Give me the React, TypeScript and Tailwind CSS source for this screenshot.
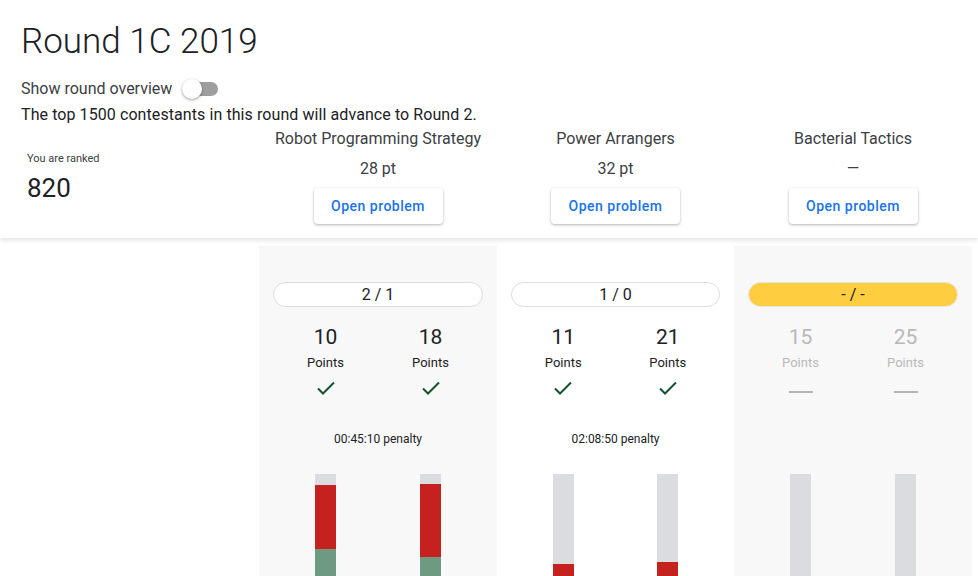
import React from "react";

type Sub = { pts: number; solved: boolean | null; bar: { gray: number; red: number; green: number } };
type Problem = {
  title: string;
  score: string;
  attempts: string;
  penalty: string | null;
  bg: string;
  disabled: boolean;
  subs: Sub[];
};

const problems: Problem[] = [
  {
    title: "Robot Programming Strategy",
    score: "28 pt",
    attempts: "2 / 1",
    penalty: "00:45:10 penalty",
    bg: "bg-[#f8f8f8]",
    disabled: false,
    subs: [
      { pts: 10, solved: true, bar: { gray: 11, red: 64, green: 80 } },
      { pts: 18, solved: true, bar: { gray: 10, red: 73, green: 80 } },
    ],
  },
  {
    title: "Power Arrangers",
    score: "32 pt",
    attempts: "1 / 0",
    penalty: "02:08:50 penalty",
    bg: "bg-white",
    disabled: false,
    subs: [
      { pts: 11, solved: true, bar: { gray: 90, red: 80, green: 0 } },
      { pts: 21, solved: true, bar: { gray: 88, red: 80, green: 0 } },
    ],
  },
  {
    title: "Bacterial Tactics",
    score: "—",
    attempts: "- / -",
    penalty: null,
    bg: "bg-[#f8f8f8]",
    disabled: true,
    subs: [
      { pts: 15, solved: null, bar: { gray: 170, red: 0, green: 0 } },
      { pts: 25, solved: null, bar: { gray: 170, red: 0, green: 0 } },
    ],
  },
];

function Check() {
  return (
    <svg width="20" height="20" viewBox="0 0 20 20" fill="none">
      <path d="M2 10.5 L7 15.5 L18 4.5" stroke="#14532d" strokeWidth="2" />
    </svg>
  );
}

function Bar({ gray, red, green }: { gray: number; red: number; green: number }) {
  return (
    <div className="flex flex-col w-[21px]">
      <div className="bg-[#dadce0]" style={{ height: gray }} />
      {red > 0 && <div className="bg-[#c5221f]" style={{ height: red }} />}
      {green > 0 && <div className="bg-[#6e9a82]" style={{ height: green }} />}
    </div>
  );
}

export default function App() {
  return (
    <div className="h-screen w-full overflow-hidden bg-white text-[#202124] font-['Roboto',sans-serif]">
      {/* Header */}
      <div className="relative z-10 bg-white shadow-[0_2px_5px_rgba(0,0,0,0.12)] pb-[14px]">
        <div className="pl-[21px] pt-[20px]">
          <h1 className="text-[35px] leading-[44px] font-light text-[#202124]">Round 1C 2019</h1>
          <div className="mt-[14px] flex items-center h-[22px]">
            <span className="text-[16px] text-[#3c4043]">Show round overview</span>
            <div className="relative ml-[10px] w-[36px] h-[20px] flex items-center">
              <div className="absolute left-[4px] w-[32px] h-[14px] rounded-full bg-[#9e9e9e]" />
              <div className="absolute left-0 w-[20px] h-[20px] rounded-full bg-white shadow-[0_1px_3px_rgba(0,0,0,0.4)]" />
            </div>
          </div>
          <p className="mt-[3px] text-[16px] leading-[24px] tracking-[0.08px] text-[#202124]">
            The top 1500 contestants in this round will advance to Round 2.
          </p>
        </div>
        <div className="grid grid-cols-[259px_238px_237px_238px]">
          <div className="pl-[27px] pt-[24px]">
            <div className="text-[11px] leading-[16px] text-[#3c4043]">You are ranked</div>
            <div className="mt-[5px] text-[26px] leading-[32px] text-[#202124]">820</div>
          </div>
          {problems.map((p) => (
            <div key={p.title} className="flex flex-col items-center">
              <div className="text-[16px] leading-[24px] text-[#3c4043]">{p.title}</div>
              <div className="mt-[6px] text-[16px] leading-[24px] text-[#3c4043]">{p.score}</div>
              <button className="mt-[7px] h-[36px] w-[129px] rounded-[4px] bg-white text-[14px] font-medium text-[#1a73e8] tracking-[0.5px] shadow-[0_1px_3px_rgba(0,0,0,0.3)]">
                Open problem
              </button>
            </div>
          ))}
        </div>
      </div>

      {/* Body */}
      <div className="grid grid-cols-[259px_238px_237px_238px] pt-[8px]">
        <div />
        {problems.map((p) => (
          <div key={p.title} className={`${p.bg} px-[14px] pt-[36px] h-[400px]`}>
            <div
              className={`h-[25px] rounded-full border flex items-center justify-center text-[16px] ${
                p.disabled ? "bg-[#ffcd40] border-[#e6e6e6]" : "bg-white border-[#dddddd]"
              }`}
            >
              {p.attempts}
            </div>
            <div className="grid grid-cols-2 mt-[16px]">
              {p.subs.map((s) => (
                <div key={s.pts} className="flex flex-col items-center">
                  <div className={`text-[21px] leading-[28px] ${p.disabled ? "text-[#b8b8b8]" : "text-[#202124]"}`}>
                    {s.pts}
                  </div>
                  <div className={`mt-[3px] text-[13px] leading-[18px] ${p.disabled ? "text-[#b8b8b8]" : "text-[#202124]"}`}>
                    Points
                  </div>
                  <div className="mt-[6px] h-[20px] flex items-center justify-center">
                    {s.solved ? <Check /> : <div className="w-[24px] h-[2px] bg-[#b3b3b3] mt-[8px]" />}
                  </div>
                </div>
              ))}
            </div>
            <div className="mt-[33px] h-[16px] text-center text-[12px] leading-[16px] text-[#202124]">
              {p.penalty ?? ""}
            </div>
            <div className="grid grid-cols-2 mt-[27px]">
              {p.subs.map((s) => (
                <div key={s.pts} className="flex justify-center">
                  <Bar {...s.bar} />
                </div>
              ))}
            </div>
          </div>
        ))}
      </div>
    </div>
  );
}
